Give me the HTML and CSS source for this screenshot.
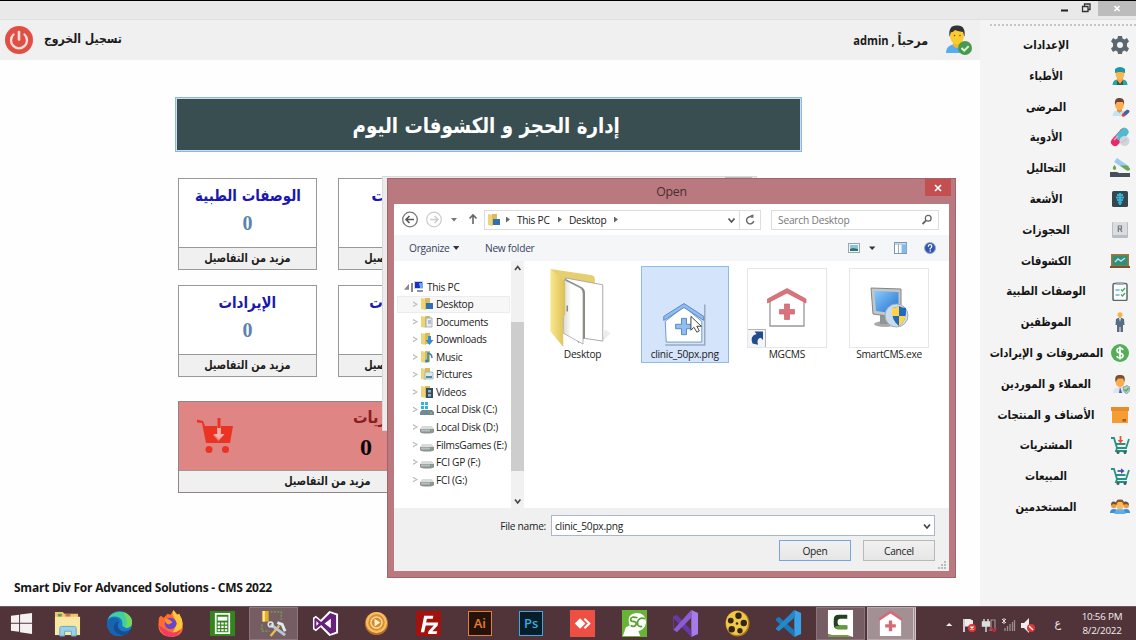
FILE: index.html
```html
<!DOCTYPE html>
<html lang="ar">
<head>
<meta charset="utf-8">
<title>CMS</title>
<link rel="stylesheet" href="styles.css">
</head>
<body>
<div class="screen">
  <header class="titlebar">
    <svg class="win-controls" width="80" height="19" viewBox="0 0 80 19">
      <path d="M5 9.500h7" stroke="#222" stroke-width="2"/>
      <path d="M26.500 5.500h5.500v5h-5.500zM28.500 5v-2h5.500v5.500h-2" fill="none" stroke="#333" stroke-width="1.300"/>
      <rect x="42" y="0" width="38" height="15" fill="#bcbcbc"/>
      <path d="M58.500 5l5 5M63.500 5l-5 5" stroke="#fff" stroke-width="1.500"/>
    </svg>
  </header>
  <div class="app">
    <main class="main">
      <div class="userbar">
        <svg width="28" height="28" viewBox="0 0 28 28"><circle cx="14" cy="14" r="14" fill="#e04f44"/><path d="M8.500 8.500a8 8 0 1 0 11 0" fill="none" stroke="#f8dedb" stroke-width="2.300" stroke-linecap="round"/><path d="M14 6v7.500" stroke="#f8dedb" stroke-width="2.600" stroke-linecap="round"/></svg>
        <span class="logout" dir="rtl">تسجيل الخروج</span>
        <span class="hello" dir="rtl">مرحباً , admin</span>
        <svg class="avatar" width="28" height="32" viewBox="0 0 28 32"><path d="M1 29q0-9 12-9t12 9z" fill="#55acee"/><path d="M8 16h8v6q-4 4-8 0z" fill="#f2b632"/><ellipse cx="12" cy="12" rx="7" ry="8.500" fill="#fccb30"/><path d="M4.500 13Q3 1 12 1.500 21 1 19.500 13L18 8q-6-1-8-2-3 3-4 2z" fill="#333"/><circle cx="9.500" cy="11.500" r=".8" fill="#7a5310"/><circle cx="15" cy="11.500" r=".8" fill="#7a5310"/><circle cx="20" cy="24" r="7" fill="#4a9a4e"/><path d="M16.500 24l2.700 2.700 4.500-4.600" fill="none" stroke="#dff1df" stroke-width="2"/></svg>
      </div>
      <h1 class="banner" dir="rtl"><span><em>إدارة الحجز و الكشوفات اليوم</em></span></h1>
      <section class="cards">
        <article class="card"><h2 dir="rtl">الوصفات الطبية</h2><b>0</b><footer dir="rtl"><em>مزيد من التفاصيل</em></footer></article>
        <article class="card wide-title"><h2 dir="rtl">الحجوزات</h2><b>0</b><footer dir="rtl"><em>مزيد من التفاصيل</em></footer></article>
        <article class="card"><h2 dir="rtl">الإيرادات</h2><b>0</b><footer dir="rtl"><em>مزيد من التفاصيل</em></footer></article>
        <article class="card"><h2 dir="rtl">المصروفات</h2><b>0</b><footer dir="rtl"><em>مزيد من التفاصيل</em></footer></article>
      </section>
      <article class="purchases">
        <div class="purchases-body">
          <svg width="36" height="36" viewBox="0 0 36 36" fill="#ea3323"><path d="M0 1.500L6 3l2 5h12v9h-4l5.500 6 5.500-6h-3V8h12l-3 17H9L5 5 0 4.500z"/><path d="M20.500 0h3v10h-3z"/><path d="M20.500 10h3v6h4L22 21l-5.500-5h4z" fill="#f5b0a8"/><circle cx="12" cy="31.500" r="3.500"/><circle cx="28.500" cy="31.500" r="3.500"/></svg>
          <div class="purchases-text"><h2 dir="rtl">المشتريات</h2><b>0</b></div>
        </div>
        <footer dir="rtl"><em>مزيد من التفاصيل</em></footer>
      </article>
      <p class="credit">Smart Div For Advanced Solutions - CMS 2022</p>
    </main>
    <nav class="sidebar">
      <ul dir="ltr">
        <li><span>الإعدادات</span><svg viewBox="0 0 20 20"><path d="M8 1h4l.5 2.500 2 1L17 3l2 3.500-2 2v3l2 2-2 3.500-2.500-1.500-2 1L12 19H8l-.5-2.500-2-1L3 17l-2-3.500 2-2v-3l-2-2L3 3l2.500 1.500 2-1z" fill="#5b6770"/><circle cx="10" cy="10" r="3" fill="#f4f4f4"/></svg></li>
        <li><span>الأطباء</span><svg viewBox="0 0 20 20"><path d="M2.500 19q0-6 7.500-6t7.500 6z" fill="#26a6a0"/><path d="M7 11h6v4l-3 3-3-3z" fill="#f5a742"/><ellipse cx="10" cy="8" rx="4.500" ry="5.500" fill="#ffb74d"/><path d="M5 7V3q5-4 10 0v4q-5-2-10 0z" fill="#2196a8"/><path d="M7 14l3 4 3-4v5H7z" fill="#3b5560"/></svg></li>
        <li><span>المرضى</span><svg viewBox="0 0 20 20"><path d="M2.500 19q0-6 7-6t7 6z" fill="#bfe6f5"/><path d="M7 11h5v3l-2.500 2L7 14z" fill="#e8913a"/><ellipse cx="9.500" cy="7.500" rx="4.500" ry="5.500" fill="#ffad55"/><path d="M5 8Q4 0 10 1q5 0 4 7l-1-3H7z" fill="#6d4632"/><path d="M13.500 18l4-3.500" stroke="#d84343" stroke-width="3.500" stroke-linecap="round"/><path d="M15.500 16.200l2-1.700" stroke="#3a65b0" stroke-width="3.500" stroke-linecap="round"/></svg></li>
        <li><span>الأدوية</span><svg viewBox="0 0 20 20"><path d="M5 15L14 5" stroke="#e62b69" stroke-width="8" stroke-linecap="round"/><path d="M10 9.500L14.500 5" stroke="#4dbbd0" stroke-width="8" stroke-linecap="round"/><path d="M4 13l4-4" stroke="#f7a5bf" stroke-width="1.500"/><circle cx="14.500" cy="14" r="5" fill="#cfd5db"/><path d="M11 16l6-4" stroke="#b9c0c8"/></svg></li>
        <li><span>التحاليل</span><svg viewBox="0 0 20 20"><path d="M5.500 2L18 10.500" stroke="#9ccbf0" stroke-width="5"/><path d="M10 7.500h7l3 3q0 3-3 2z" fill="#69a844"/><path d="M4.500 7q3.500 4 0 5-3.500-1 0-5z" fill="#69a844"/><path d="M0 14h7l2 1h11v4H0z" fill="#46505a"/></svg></li>
        <li><span>الأشعة</span><svg viewBox="0 0 20 20"><rect x="2" y="2" width="16" height="16" rx="1.500" fill="#37474f"/><path d="M10 4v12M7 6h6M6 8.500h8M7 11h6M8 13.500h4" stroke="#35b1d2" stroke-width="2"/></svg></li>
        <li><span>الحجوزات</span><svg viewBox="0 0 20 20"><rect x="2" y="2" width="16" height="16" rx="1" fill="#b9bec5"/><rect x="3" y="2" width="14" height="13" fill="#d9dce1"/><path d="M8.300 12V6h3.200v2.800H8.300M10 9l2 3" stroke="#777" stroke-width="1.200" fill="none"/></svg></li>
        <li><span>الكشوفات</span><svg viewBox="0 0 20 20"><rect x="1" y="3" width="18" height="13" fill="#a77637"/><rect x="2.500" y="4.500" width="15" height="10" fill="#2f8d78"/><path d="M0 15h20v2H0z" fill="#815030"/><path d="M5 11l3-3 3 2 4-3" fill="none" stroke="#b7e3ec" stroke-width="1.500"/></svg></li>
        <li><span>الوصفات الطبية</span><svg viewBox="0 0 20 20"><rect x="3" y="2.500" width="14" height="17" rx="1.500" fill="#fff" stroke="#5a6770" stroke-width="1.500"/><path d="M6.500 1h7v3h-7z" fill="#a3adb5"/><path d="M5.500 9h4M5.500 14h4" stroke="#5bb8dd" stroke-width="1.300"/><path d="M11 8.500l1.500 1.500 2.500-3M11 13.500l1.500 1.500 2.500-3" fill="none" stroke="#4cae50" stroke-width="1.400"/></svg></li>
        <li><span>الموظفين</span><svg viewBox="0 0 20 20"><circle cx="10" cy="2.800" r="2.500" fill="#fbb13f"/><path d="M6 7q4-3 8 0l.5 6H13v7h-2.500v-5h-1v5H7v-7H5.500z" fill="#566d82"/><path d="M9 6h2l-1 4z" fill="#e7edf2"/></svg></li>
        <li><span>المصروفات و الإيرادات</span><svg viewBox="0 0 20 20"><circle cx="10" cy="10" r="9" fill="#52ae57"/><path d="M13 7q-1-2-3-2-3 0-3 2.300T10 10q3 .6 3 2.800T10 15q-2.500 0-3.200-2M10 3.500v13" fill="none" stroke="#fff" stroke-width="1.700"/></svg></li>
        <li><span>العملاء و الموردين</span><svg viewBox="0 0 20 20"><path d="M3 19q0-6 7-6t7 6z" fill="#dfe5ee"/><path d="M10 13l-1 6h3z" fill="#4957b0"/><ellipse cx="10" cy="7.500" rx="4.500" ry="5.500" fill="#ffab50"/><path d="M5.500 8Q4 0 10 1q6-1 4.500 7L13 4.500H8z" fill="#795032"/><path d="M13 13q2 0 4-1.500 1.500 1.500 3 1.500 0 5-3.500 7-3.500-2-3.500-7z" fill="#b8ceca" stroke="#8ca5a2"/><path d="M14.500 15.500l1.500 1.500 2.500-3" fill="none" stroke="#4cae50" stroke-width="1.300"/></svg></li>
        <li><span>الأصناف و المنتجات</span><svg viewBox="0 0 20 20"><rect x="2" y="4" width="16" height="14" fill="#f59c32"/><rect x="1" y="2" width="18" height="4" fill="#e88b28"/><path d="M12.500 14h3.500v2.500h-3.500z" fill="#a15b28"/></svg></li>
        <li><span>المشتريات</span><svg viewBox="0 0 20 20"><path d="M1 3h3l3 10h9l3-9M5.500 9h10M7 13l-1 3h11" fill="none" stroke="#269382" stroke-width="1.800"/><circle cx="8" cy="17.500" r="1.500" fill="#465b5a"/><circle cx="15" cy="17.500" r="1.500" fill="#465b5a"/><path d="M10.500 1v5" stroke="#e94e3c" stroke-width="1.700"/><path d="M7.700 5h5.600l-2.800 3.500z" fill="#e94e3c"/></svg></li>
        <li><span>المبيعات</span><svg viewBox="0 0 20 20"><path d="M1 3h3l3 10h9l3-9M5.500 9h10M7 13l-1 3h11" fill="none" stroke="#269382" stroke-width="1.800"/><circle cx="8" cy="17.500" r="1.500" fill="#465b5a"/><circle cx="15" cy="17.500" r="1.500" fill="#465b5a"/><path d="M7.500 5h4" stroke="#4a48ae" stroke-width="1.700"/><path d="M11 2.300v5.400l3.500-2.700z" fill="#4a48ae"/></svg></li>
        <li><span>المستخدمين</span><svg viewBox="0 0 20 20"><path d="M0 16q0-4 4-4t4 4zM12 16q0-4 4-4t4 4z" fill="#3f8ed8"/><circle cx="3.800" cy="8.500" r="2.800" fill="#e99c48"/><circle cx="16.200" cy="8.500" r="2.800" fill="#e99c48"/><path d="M1 8q0-4 3-3.500t3 3.500l-3-1zM13 8q0-4 3-3.500t3 3.500l-3-1z" fill="#76502f"/><path d="M4.500 17q0-5 5.500-5t5.500 5z" fill="#5ab0ee"/><ellipse cx="10" cy="8" rx="3.500" ry="4.500" fill="#ffb65c"/><path d="M6.200 8Q5 2 10 2.500q5-.5 3.800 5.500L12 5H8z" fill="#875a30"/></svg></li>
      </ul>
    </nav>
  </div>

  <footer class="taskbar">
    <div class="slot start"><svg width="24" height="24" viewBox="0 0 24 24" fill="#f5f0f1"><path d="M1 4l8.500-1.200v8.400H1zM10.500 2.600L23 1v10.200H10.500zM1 12.300h8.500v8.400L1 19.500zM10.500 12.300H23V23l-12.500-1.800z"/></svg></div>
    <div class="slot"><svg viewBox="0 0 28 28"><path d="M1 2h8l2 2h14v20H1z" fill="#e9c96b"/><path d="M4 4h4v3H4z" fill="#5a9e4b"/><path d="M12 4h5v3h-5z" fill="#d46d52"/><path d="M1 7h26v19H1z" fill="#f9e7a6"/><path d="M6 27v-8q0-2 2-2h13q2 0 2 2v8h-5v-5h-7v5z" fill="#9ad1e8" stroke="#63a9c9"/></svg></div>
    <div class="slot"><svg viewBox="0 0 28 28"><circle cx="14" cy="14" r="13" fill="#167ac6"/><path d="M2 10C5-2 27-1 27 13q0 6-8 5-3-1-2-4 0-6-6-7-6-1-9 3z" fill="#43cda0"/><path d="M18 2q10 4 9 12-1 5-7 4.500 4-6-2-16.500z" fill="#76d85a"/><path d="M1 14q1-6 7-6 5 0 6 4-5 0-5 5 0 7 9 8-8 5-14-2-3-4-3-9z" fill="#1765b0"/><path d="M14 12q-4 5 1 9 4 3 11-1-4 8-11 6-7-2-7-8 0-5 6-6z" fill="#1b4b92"/></svg></div>
    <div class="slot"><svg viewBox="0 0 28 28"><path d="M2 8l2-2 3 2 4-4 3 1 3-5 4 5 2-1 3 7q4 16-11 17Q1 27 1.500 15z" fill="#ff6b30"/><path d="M17 0l4 5 2-1q7 11 0 19l-8 3 6-12-5-9z" fill="#ffc83c"/><path d="M2 16q3 11 12 12 9-1 11-8-8 6-15 1z" fill="#f43b62"/><circle cx="14" cy="14" r="6" fill="#6847cf"/><path d="M8 9q6 0 8 4l-4 2q-4-1-4-6z" fill="#ff942e"/></svg></div>
    <div class="slot"><svg viewBox="0 0 28 28"><path d="M1 1h26v26H1z" fill="#35851f"/><path d="M7 4h14v20H7z" fill="none" stroke="#fff" stroke-width="1.800"/><path d="M9 7h10v4H9z" fill="#fff"/><path d="M9 14h10M9 17.500h10M9 21h10" stroke="#fff" stroke-width="2.200" stroke-dasharray="2.500 1.200"/></svg></div>
    <div class="slot lit"><svg viewBox="0 0 28 28"><path d="M2 1h7v11H2z" fill="#e7af26"/><path d="M3 1h2v11H3z" fill="#fff0a6"/><path d="M11 2h11v8M2 15v7h8" fill="none" stroke="#6caf3f" stroke-dasharray="2 1.500" stroke-width="1.300"/><path d="M11 27l9-11" stroke="#e6bd48" stroke-width="2.500"/><path d="M11 15l15 11" stroke="#b9c7d4" stroke-width="3"/><path d="M18 13l5 2 3 7" fill="none" stroke="#dfeaf0" stroke-width="3"/><circle cx="11" cy="15" r="2.500" fill="none" stroke="#dfeaf0" stroke-width="1.500"/></svg></div>
    <div class="slot"><svg viewBox="0 0 28 28"><path d="M18 1l9 3v20l-9 3-9-9-5 4-3-2V8l3-2 5 4z" fill="#fff"/><path d="M19 3l6 2.500v17L19 25l-9.500-9.500L4 20l-1.500-1V9L4 8l5.500 4.500zM4.500 11.500v5L7 14zM19.500 9L13 14l6.500 5z" fill="#68217a" fill-rule="evenodd"/></svg></div>
    <div class="slot"><svg viewBox="0 0 28 28"><circle cx="14" cy="14" r="12" fill="#bc6d24"/><circle cx="14" cy="13" r="11" fill="#f3bf68"/><circle cx="14" cy="13" r="8.500" fill="#dd8b2b"/><circle cx="14" cy="13" r="6.500" fill="#fbdc9b"/><circle cx="14" cy="13" r="5" fill="#d98728"/><path d="M12 9l6 4-6 4z" fill="#fff4d2"/></svg></div>
    <div class="slot"><svg viewBox="0 0 28 28"><path d="M1 1h26v26H1z" fill="#a5110c"/><path d="M6 23L9.500 6H19l-.5 3h-6.200l-.7 4h5l-.5 3h-5L9.500 23zM15 13h9l-.5 3-5.500 6h5l-.6 3h-9l.6-3 5.500-6h-5z" fill="#fff"/></svg></div>
    <div class="slot"><span class="adobe ai">Ai</span></div>
    <div class="slot"><span class="adobe ps">Ps</span></div>
    <div class="slot"><svg viewBox="0 0 28 28"><path d="M1 0h26v28H1z" fill="#ed4f43"/><path d="M6 14l5.500-5.500L17 14l-5.500 5.500z" fill="#fff"/><path d="M16 9l5 5-5 5" fill="none" stroke="#fff" stroke-width="2.300"/></svg></div>
    <div class="slot"><svg viewBox="0 0 28 28"><path d="M1 0h26v28H1z" fill="#68b436"/><path d="M2 27l3-9 4-2Q5 4 16 3q10 0 10 10-1 7-8 9l2 5z" fill="#fff"/><path d="M17 8q-7-2-7 2 0 2 4 2 3 1 1 4-2 2-5 0M25 9q-7-2-8 4 0 5 5 4" fill="none" stroke="#55a02e" stroke-width="1.800"/></svg></div>
    <div class="slot"><svg viewBox="0 0 28 28"><path d="M20 0l7 3v22l-7 3z" fill="#a67bea"/><path d="M1 7l4-2 15 16v7L2 9v11l-1-1z" fill="#6739a6"/><path d="M2 20L20 0v8L5 23l-4-3z" fill="#8e5bd6"/></svg></div>
    <div class="slot"><svg viewBox="0 0 28 28"><ellipse cx="14" cy="14" rx="12.500" ry="13.500" fill="#b07b15"/><ellipse cx="13.500" cy="13.500" rx="11.500" ry="12.500" fill="#f0c746"/><g fill="#33251e"><circle cx="15" cy="6" r="3.300"/><circle cx="7" cy="11" r="3"/><circle cx="8" cy="20" r="3.300"/><circle cx="16.500" cy="21.500" r="2.800"/><circle cx="20.500" cy="13.500" r="3.300"/><circle cx="13.500" cy="14" r="1.300"/></g></svg></div>
    <div class="slot"><svg viewBox="0 0 28 28"><path d="M20 0l7 3v22l-7 3z" fill="#3ba2e8"/><path d="M1 9l3-2 16 14v7L1 11z" fill="#1d77bb"/><path d="M1 19L20 0v8L4 22l-3-2z" fill="#2489cc"/></svg></div>
    <div class="slot lit"><svg viewBox="0 0 28 28"><path d="M1 0h26v28H14l-13-3z" fill="#fff"/><path d="M21 5H12q-5 0-5 5v5q0 5 5 5h9v-4h-7q-3 0-3-3v-1q0-3 3-3h7z" fill="#253f22"/><path d="M8 17q1 3 4 3h9v-4h-8z" fill="#5c9d35"/><path d="M1 26h20l6 2H1z" fill="#6d9f3b"/></svg></div>
    <div class="slot lit current"><svg viewBox="0 0 28 28"><path d="M3 10l11-8 11 8v17H3z" fill="#fff"/><path d="M2 10l12-8 12 8" fill="none" stroke="#d66973" stroke-width="2.600"/><path d="M14 11v11M8.500 16.500h11" stroke="#d66973" stroke-width="3.500"/></svg></div>
    <svg class="tray" width="128" height="28" viewBox="0 0 128 28">
      <path d="M5 16l3.200-3 3.200 3z" fill="#eee"/>
      <path d="M23 9v13" stroke="#fff" stroke-width="1.500"/><path d="M24 9h5l3 1.500v6h-8z" fill="#f0ecec"/><circle cx="31" cy="18" r="4" fill="#d93937"/><path d="M29.500 16.500l3 3m0-3l-3 3" stroke="#fff" stroke-width="1.200"/>
      <path d="M43 9v4M47 9v4M41.500 12h7v4h-7zM45 16v6" stroke="#ddd" stroke-width="1.400" fill="#ddd"/><path d="M50 21V10h4v9" fill="none" stroke="#9d9195" stroke-width="1.200"/><path d="M48 21q2-5 4-1 2 3 3-2" fill="none" stroke="#c9303a" stroke-width="1.500"/>
      <path d="M64 21v-3M66.500 21v-5M69 21v-7M71.500 21V12M73.500 21V10" stroke="#9a8c90" stroke-width="1.300"/><path d="M61 9l4 4m0-4l-4 4M63 8v6" stroke="#ddd"/>
      <path d="M80 13h3l5-5v15l-5-5h-3z" fill="#f1eded"/><circle cx="90" cy="18" r="4" fill="#d93937"/><path d="M88 16l4 4" stroke="#fff" stroke-width="1.200"/>
    </svg>
    <span class="lang">ع</span>
    <div class="clock"><span>10:56 PM</span><span>8/2/2022</span></div>
  </footer>

  <div class="back-window"><i></i></div>

  <section class="dialog">
    <div class="dialog-title"><span>Open</span><button class="close" aria-label="Close"><svg width="10" height="10" viewBox="0 0 10 10"><path d="M2 2l6 6M8 2L2 8" stroke="#fff" stroke-width="1.700"/></svg></button></div>
    <div class="dialog-inner">
      <div class="navrow">
        <svg width="90" height="31" viewBox="0 0 90 31" fill="none"><circle cx="16" cy="15.500" r="7.300" stroke="#777" stroke-width="1.300"/><path d="M12 15.500h8M15.500 12L12 15.500l3.500 3.500" stroke="#555" stroke-width="1.600"/><circle cx="40" cy="15.500" r="7.300" stroke="#ccc" stroke-width="1.200"/><path d="M36 15.500h8M40.500 12l3.500 3.500-3.500 3.500" stroke="#ccc" stroke-width="1.500"/><path d="M57 14h6l-3 3.500z" fill="#777"/><path d="M79 20v-9M75.500 14.500L79 11l3.500 3.500" stroke="#666" stroke-width="1.600"/></svg>
        <div class="address">
          <svg width="14" height="14" viewBox="0 0 14 14"><use href="#folder"/><path d="M6 6h7v6H6z" fill="#2f6fb4"/></svg>
          <i class="sep"></i><span class="pc">This PC</span><i class="sep"></i><span class="dt">Desktop</span><i class="sep"></i>
          <svg class="addr-end" width="36" height="18" viewBox="0 0 36 18" fill="none"><path d="M4.500 7.500l3 3.500 3-3.500" stroke="#555" stroke-width="1.700"/><path d="M15.500 0v18" stroke="#ddd"/><path d="M28.500 6.500a3.600 3.600 0 1 0 1.200 3.500" stroke="#666" stroke-width="1.400"/><path d="M26 4.500l3.300 2.500.2-3.500z" fill="#666"/></svg>
        </div>
        <div class="search"><span>Search Desktop</span><svg width="12" height="12" viewBox="0 0 12 12" fill="none" stroke="#666"><circle cx="7.200" cy="4.200" r="2.900" stroke-width="1.300"/><path d="M5 6.500L1.500 10" stroke-width="1.800"/></svg></div>
      </div>
      <div class="toolbar">
        <span class="org">Organize</span><svg width="8" height="6" viewBox="0 0 8 6"><path d="M1 1h6.400L4.200 5z" fill="#334"/></svg><span class="newf">New folder</span>
        <svg class="tools" width="90" height="16" viewBox="0 0 90 16"><rect x=".5" y="3.500" width="11" height="9" fill="#edf6fc" stroke="#9ba6b0"/><path d="M2 5h8v4H2z" fill="#8ac2e8"/><path d="M2 9l3-1 5 1v2H2z" fill="#3b745c"/><path d="M21 6.500h6.400L24.200 10z" fill="#333"/><rect x="46.500" y="2.500" width="12" height="11" fill="#fff" stroke="#7d98ac"/><path d="M46.500 4h12M50.500 4v9" stroke="#8ab0c8"/><path d="M53.500 4.500h5v8.500h-5z" fill="#82baf0"/><circle cx="82" cy="8" r="5.500" fill="#3154af" stroke="#9caccf"/><path d="M80.300 6.700q0-2 1.800-2t1.700 1.700q0 1-1.600 2v1M82.200 10.300v1.400" stroke="#fff" stroke-width="1.200" fill="none"/></svg>
      </div>
      <div class="browser">
        <ul class="tree">
          <li class="root"><i class="open"></i><svg viewBox="0 0 14 14"><path d="M1 3v9" stroke="#888" stroke-width="2"/><path d="M3 1h9v8H3z" fill="#ccd4df"/><path d="M4 2h7v6H4z" fill="#1b2fc0"/><path d="M8 3h4v5H9z" fill="#6aa8e8"/><path d="M6 10h6v2H6z" fill="#8a96a3"/></svg><span>This PC</span></li>
          <li class="on"><i></i><svg viewBox="0 0 14 14"><use href="#folder"/><path d="M6 6h7v6H6z" fill="#2f6fb4"/></svg><span>Desktop</span></li>
          <li><i></i><svg viewBox="0 0 14 14"><use href="#folder"/><path d="M6 3h6v9H6z" fill="#e8edf3" stroke="#94a3b1" stroke-width=".8"/><path d="M8 6h3M8 8h3" stroke="#88a"/></svg><span>Documents</span></li>
          <li><i></i><svg viewBox="0 0 14 14"><use href="#folder"/><path d="M8 4h3v4h2.500L9.500 13 5.500 8H8z" fill="#3689d6"/></svg><span>Downloads</span></li>
          <li><i></i><svg viewBox="0 0 14 14"><use href="#folder"/><path d="M8 11V3q4 1 4 5" stroke="#2b88cc" stroke-width="1.500" fill="none"/><ellipse cx="7" cy="11" rx="2" ry="1.500" fill="#2b88cc"/></svg><span>Music</span></li>
          <li><i></i><svg viewBox="0 0 14 14"><use href="#folder"/><path d="M5 5h8v7H5z" fill="#d6eaf5" stroke="#8ea7b5" stroke-width=".7"/><path d="M6 9h6v2H6z" fill="#4b8f9c"/></svg><span>Pictures</span></li>
          <li><i></i><svg viewBox="0 0 14 14"><use href="#folder"/><path d="M6 3h7v10H6z" fill="#394a59"/><path d="M8 5h3v2.500H8zM8 9h3v2.500H8z" fill="#89b5d2"/></svg><span>Videos</span></li>
          <li><i></i><svg viewBox="0 0 14 14"><path d="M1 0h3v3H1zM5 0h3v3H5zM1 4h3v3H1zM5 4h3v3H5z" fill="#2bb6e8"/><path d="M2 8h10l2 2v3H0v-3z" fill="#758895"/><path d="M10 11h2" stroke="#7fe06b"/></svg><span>Local Disk (C:)</span></li>
          <li><i></i><svg viewBox="0 0 14 14"><use href="#disk"/></svg><span>Local Disk (D:)</span></li>
          <li><i></i><svg viewBox="0 0 14 14"><use href="#disk"/></svg><span>FilmsGames (E:)</span></li>
          <li><i></i><svg viewBox="0 0 14 14"><use href="#disk"/></svg><span>FCI GP (F:)</span></li>
          <li><i></i><svg viewBox="0 0 14 14"><use href="#disk"/></svg><span>FCI (G:)</span></li>
        </ul>
        <div class="scroll">
          <svg width="13" height="14" viewBox="0 0 13 14"><path d="M4 9l2.700-3.500L9.400 9" fill="none" stroke="#444" stroke-width="1.600"/></svg>
          <div class="thumb"></div>
          <svg width="13" height="14" viewBox="0 0 13 14"><path d="M4 5.500L6.700 9l2.700-3.500" fill="none" stroke="#444" stroke-width="1.600"/></svg>
        </div>
        <div class="files">
          <figure><svg width="80" height="81" viewBox="0 0 80 81"><defs><linearGradient id="fy"><stop offset="0" stop-color="#f9e78f"/><stop offset="1" stop-color="#dcbf54"/></linearGradient><linearGradient id="fp"><stop offset="0" stop-color="#d8d8d4"/><stop offset=".4" stop-color="#fff"/></linearGradient></defs><path d="M60 74l8-8-6-4z" fill="#ededed"/><path d="M7 1l41 6q4 1 4 4v12L20 14z" fill="#e7ce6f"/><path d="M22 10l38 7v57l-20-3z" fill="#fff" stroke="#aaa"/><path d="M22 11l16 8q4 2 4 6v46l-7 5z" fill="#858b83"/><path d="M21 12l16 8q3 2 3 6v51l-20-11z" fill="url(#fp)" stroke="#999" stroke-width=".7"/><path d="M7 1l15 14v32l-2 3v30L7 64z" fill="url(#fy)"/><path d="M24 38v6" stroke="#555"/></svg><figcaption>Desktop</figcaption></figure>
          <figure class="selected"><svg width="80" height="81" viewBox="0 0 80 81"><path d="M60 37v41H20" fill="none" stroke="#9aabc0" stroke-width="1.500"/><path d="M20 54l19-15 18 15v21H21z" fill="#fff" stroke="#6f9ac7"/><path d="M18.500 53v-4L39 36l20 13v4L39 40z" fill="#93bdf0" stroke="#5788c4"/><path d="M36.500 51h5v6h6v4.500h-6v6h-5v-6h-6v-4.500h6z" fill="#93bdf0" stroke="#5788c4"/><path d="M46 49v14l3-3 3 5 2.500-1.300-2.500-4.700h4.500z" fill="#fff" stroke="#333" stroke-width=".9"/></svg><figcaption>clinic_50px.png</figcaption></figure>
          <figure><svg class="framed" width="80" height="80" viewBox="0 0 80 80"><path d="M23 33v25h34V33L40 23z" fill="#fff" stroke="#989898" stroke-width="1.300"/><path d="M20.500 35v-4L40 20.500 59 31v4L40 25z" fill="#d9747c" stroke="#c9616a" stroke-width=".7"/><path d="M37.500 36h5v5.500h5v4.500h-5v5.500h-5V46h-5v-4.500h5z" fill="#d9747c" stroke="#c9616a" stroke-width=".7"/><path d="M.5 61.500h18v18H.5z" fill="#f4f5f6" stroke="#b3b3b3"/><path d="M5.500 75.500q-3-8 4-9.500l-2-2.500h8.500v8.500l-2.300-2.300q-4.500 1-2.700 7z" fill="#214b8f"/></svg><figcaption>MGCMS</figcaption></figure>
          <figure><svg class="framed" width="80" height="80" viewBox="0 0 80 80"><defs><linearGradient id="scr" x2="1" y2="1"><stop offset="0" stop-color="#8acaff"/><stop offset="1" stop-color="#216fc9"/></linearGradient></defs><ellipse cx="36" cy="56" rx="11" ry="3" fill="#a7aaab"/><path d="M31 47h11v9H31z" fill="#8f9495"/><path d="M22 20l30 1v29l-28-4z" fill="#c4c7c8" stroke="#808586"/><path d="M25 23l24.500 1v22L27 43z" fill="url(#scr)"/><circle cx="47.500" cy="47.500" r="11.500" fill="#c9dceb" stroke="#a0aeba"/><path d="M43 40q4 0 7-2 3 2 7 2 1 12-7 18-8-6-7-18z" fill="#2469b9"/><path d="M43 40q4 0 7-2v10h-7zM50 48h6.500q-1 6-6.500 10z" fill="#ffd44b"/></svg><figcaption>SmartCMS.exe</figcaption></figure>
        </div>
      </div>
      <div class="dialog-foot">
        <div class="name-row"><label>File name:</label><div class="field"><span>clinic_50px.png</span><svg width="12" height="10" viewBox="0 0 12 10"><path d="M3 3.500L6 7l3-3.500" fill="none" stroke="#444" stroke-width="1.700"/></svg></div></div>
        <div class="buttons"><button class="primary">Open</button><button>Cancel</button></div>
        <svg class="grip" width="9" height="9" viewBox="0 0 9 9" fill="#bbb"><path d="M6 0h2v2H6zM3 3h2v2H3zM6 3h2v2H6zM0 6h2v2H0zM3 6h2v2H3zM6 6h2v2H6z"/></svg>
      </div>
    </div>
  </section>
  <svg width="0" height="0" class="defs"><symbol id="folder" viewBox="0 0 14 14"><path d="M1 1l5 1v11l-5-1z" fill="#ecd47b"/><path d="M5 1h5v11H5z" fill="#d9bb59"/></symbol><symbol id="disk" viewBox="0 0 14 14"><path d="M2 6h10l2 3H0z" fill="#d8dadb"/><path d="M0 9h14v3q-1 1.500-7 1.500T0 12z" fill="#8d9192"/><path d="M1 9.500h9v2H1z" fill="#b9bdbe"/><path d="M11 10.500h1.500" stroke="#69c754" stroke-width="1.500"/></symbol></svg>
</div>
</body>
</html>
```
FILE: styles.css
```css
* { box-sizing: border-box; }
body { margin: 0; font-family: "DejaVu Sans", sans-serif; background: #fff; }
h1, h2, p, ul, figure { margin: 0; padding: 0; }
ul { list-style: none; }
em { font-style: normal; display: inline-block; }
svg { display: block; flex: none; }
.screen { position: relative; width: 1136px; height: 640px; display: flex; flex-direction: column; overflow: hidden; border-top: 1px solid #000; }
.defs { position: absolute; }

.titlebar { height: 19px; flex: none; background: #e9e9e9; border-bottom: 1px solid #e0e0e0; display: flex; justify-content: flex-end; }
.app { flex: 1; display: flex; min-height: 0; }
.main { width: 980px; background: #fefefe; display: flex; flex-direction: column; }
.userbar { height: 40px; flex: none; background: #f0f0f0; display: flex; align-items: center; padding: 0 7px 0 5px; }
.logout { margin-left: 11px; font-weight: bold; font-size: 12.500px; line-height: 16px; padding-bottom: 2px; color: #1b1b1b; white-space: nowrap; transform: scaleX(.87); transform-origin: left; }
.hello { margin-left: auto; margin-right: 17px; font: bold 12.500px "Open Sans", "DejaVu Sans", sans-serif; color: #1b1b1b; white-space: nowrap; transform: scaleX(.89); transform-origin: right; }
.banner { margin: 37px 0 0 175px; width: 627px; height: 55px; flex: none; border: 1px solid #8db6e2; padding: 1px; background: #c9def5; display: flex; }
.banner span { flex: 1; background: #384e50; color: #fff; font-size: 21.500px; line-height: 53px; height: 51px; text-align: center; padding-right: 4px; }
.banner em { transform: scaleX(.85); }

.cards { margin: 26px 0 0 178px; display: grid; grid-template-columns: 139px 139px; grid-auto-rows: 92px; gap: 15px 21px; flex: none; }
.card { border: 1px solid #999; display: flex; flex-direction: column; align-items: center; background: #fff; }
.card h2 { font-size: 16px; line-height: 34px; color: #1a18ae; white-space: nowrap; transform: scaleX(.84); }
.wide-title h2 { transform: scaleX(.97); }
.card b, .purchases b { font-family: "Liberation Serif", serif; }
.card b { font-size: 20px; line-height: 21px; color: #5c83ab; }
.card footer, .purchases footer { border-top: 1px solid #999; background: #f0f0f0; color: #1d1d1d; font-weight: bold; font-size: 12px; line-height: 20px; height: 22px; text-align: center; white-space: nowrap; }
.card footer { margin-top: auto; width: 100%; }
.card footer em, .purchases footer em { transform: scaleX(.81); }
.purchases { margin: 24px 0 0 178px; width: 299px; height: 92px; flex: none; border: 1px solid #8f8585; display: flex; flex-direction: column; background: #df8584; }
.purchases-body { flex: 1; display: flex; padding: 16px 0 0 18px; }
.purchases-text { margin: -16px 0 0 120px; display: flex; flex-direction: column; }
.purchases h2 { font-size: 16.500px; line-height: 32px; color: #8b1c24; white-space: nowrap; transform: scaleX(.88); transform-origin: left; }
.purchases b { font-size: 24px; line-height: 26px; padding-left: 7px; color: #080808; }
.credit { margin: auto 0 9px 14px; font: bold 12px/18px "Open Sans", sans-serif; color: #161616; letter-spacing: -.24px; }

.sidebar { width: 156px; background: #f4f4f4; padding: 4px 0 0; }
.sidebar ul { border-top: 2px dotted #c6c6c6; margin-left: 10px; padding-top: 3.600px; }
.sidebar li { height: 30.800px; display: flex; align-items: center; margin-left: -11px; }
.sidebar span { width: 134px; text-align: center; font-size: 12px; font-weight: bold; color: #141414; white-space: nowrap; transform: scaleX(.84); }
.sidebar svg { width: 20px; height: 20px; margin-left: -3px; }

.taskbar { height: 34px; flex: none; background: #50343a; border-top: 1px solid #6d5a5e; display: flex; align-items: center; }
.slot { width: 51.500px; display: flex; justify-content: center; flex: none; }
.slot svg { width: 27px; height: 27px; }
.slot.start { width: 42px; }
.slot.start svg { width: 23px; height: 23px; }
.slot.lit { width: 49px; margin: 0 1.250px; height: 33px; align-items: center; background: #755d63; border: 1px solid #8a767b; }
.slot.current { background: #a29095; border-color: #b8aaad; border-right: 3px double #d0c5c8; }
.adobe { width: 24px; height: 25px; border: 1.500px solid; font: 600 13px/22px "Open Sans", sans-serif; text-align: center; }
.ai { color: #e87d2c; background: #261307; }
.ps { color: #38aadf; background: #071d29; }
.tray { margin-left: 23px; }
.lang { color: #eee; font-size: 11px; width: 12px; margin-left: -14px; }
.clock { margin-left: auto; width: 68px; display: flex; flex-direction: column; align-items: center; color: #f3eeef; font: 9.800px/14px "Open Sans", sans-serif; letter-spacing: -.2px; white-space: nowrap; }

.back-window { position: absolute; left: 382px; top: 175px; width: 375px; height: 255px; background: #ececec; border: 1px solid #d9d9d9; }
.back-window i { display: block; width: 27px; height: 2px; background: #bdbdbd; margin-left: 342px; }

.dialog { position: absolute; left: 387px; top: 177px; width: 569px; height: 400px; background: #b9797e; border: 1px solid #9f656c; padding: 0 6px 6px; display: flex; flex-direction: column; font-family: "Open Sans", sans-serif; font-size: 10.200px; color: #222; letter-spacing: -.27px; }
.dialog-title { height: 25px; flex: none; text-align: center; position: relative; font-size: 12.300px; line-height: 25px; color: #4a2c31; }
.close { position: absolute; right: -2px; top: 0; width: 26px; height: 17px; border: 0; background: #c34f50; display: flex; align-items: center; justify-content: center; padding: 0; }
.dialog-inner { flex: 1; display: flex; flex-direction: column; background: #fff; min-height: 0; }
.navrow { height: 31px; flex: none; display: flex; align-items: center; }
.address { width: 277px; height: 20px; border: 1px solid #dcdcdc; display: flex; align-items: center; padding-left: 2px; white-space: nowrap; }
.sep { width: 4px; height: 6px; background: #666; clip-path: polygon(0 0, 100% 50%, 0 100%); margin: 0 7px 0 5px; }
.pc { width: 36px; }
.dt { width: 40px; }
.addr-end { margin-left: auto; }
.search { margin-left: 10px; width: 168px; height: 20px; border: 1px solid #dcdcdc; display: flex; align-items: center; justify-content: space-between; padding: 0 5px 0 6px; color: #777; letter-spacing: -.2px; }
.toolbar { height: 26px; flex: none; background: #f5f6f8; display: flex; align-items: center; padding: 0 8px 0 15px; color: #39435f; }
.org { width: 43px; white-space: nowrap; }
.newf { margin-left: 25px; }
.tools { margin-left: auto; margin-right: 3px; }
.browser { height: 247px; flex: none; display: flex; }
.tree { width: 117px; padding-top: 17px; }
.tree li { height: 17.540px; display: flex; align-items: center; padding-left: 17px; margin: 0 1px 0 3px; white-space: nowrap; border: 1px solid transparent; }
.tree li svg { width: 14px; height: 14px; margin: 0 2px; }
.tree li.root { padding-left: 8px; }
.tree li.on { background: #f7f7f7; border-color: #ececec; }
.tree i { flex: none; width: 5px; height: 6px; background: #bbb; clip-path: polygon(0 0, 100% 50%, 0 100%, 0 75%, 60% 50%, 0 25%); margin-left: -2px; }
.tree i.open { background: #888; clip-path: polygon(100% 0, 100% 100%, 0 100%); }
.scroll { width: 13px; background: #f1f1f1; display: flex; flex-direction: column; justify-content: space-between; }
.thumb { height: 149px; margin-top: 23px; background: #cdcdcd; }
.files { flex: 1; display: grid; grid-template-columns: repeat(4, 88px); column-gap: 14.200px; padding: 5px 0 0 14.500px; align-content: start; }
.files figure { height: 97px; display: flex; flex-direction: column; align-items: center; padding-top: 1px; border: 1px solid transparent; }
.files .selected { background: #d3e4fb; border-color: #8ebbe8; }
.files svg { height: 80px; }
.files figcaption { line-height: 13px; white-space: nowrap; letter-spacing: -.27px; }
.framed { outline: 1px solid #e6e6e6; outline-offset: -1px; }
.dialog-foot { flex: 1; background: #f0f0f0; padding: 7px 14px 0 0; position: relative; }
.name-row { display: flex; align-items: center; justify-content: flex-end; gap: 5px; }
.field { width: 384px; height: 21px; background: #fff; border: 1px solid #abb6cc; display: flex; align-items: center; justify-content: space-between; padding: 0 1px 0 3px; }
.buttons { display: flex; justify-content: flex-end; gap: 12px; margin-top: 4px; }
.buttons button { width: 72px; height: 21px; padding: 0; border: 1px solid #b8b8b8; background: linear-gradient(#f1f1f1, #e6e6e6); font: inherit; letter-spacing: inherit; color: #222; }
.buttons .primary { border-color: #76a5e6; }
.grip { position: absolute; right: 2px; bottom: 1px; }
```
